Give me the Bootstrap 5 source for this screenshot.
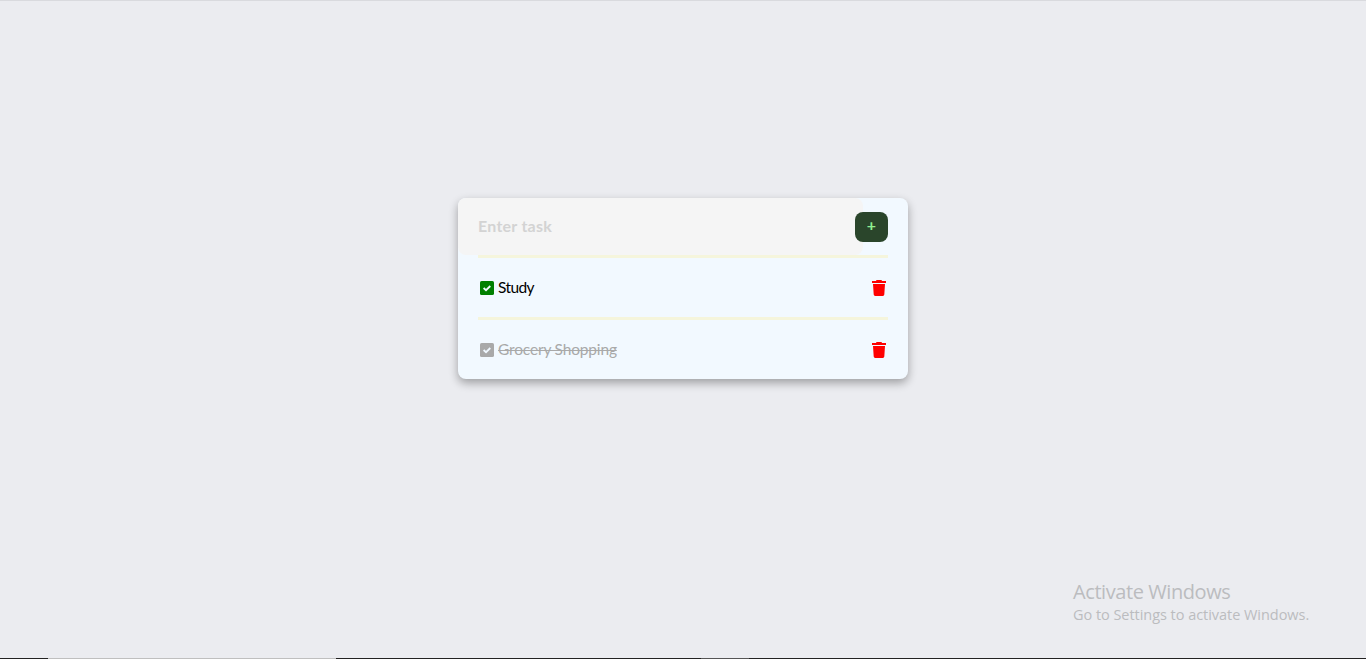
<!DOCTYPE html>
<html lang="en">
<head>
<meta charset="utf-8">
<meta name="viewport" content="width=device-width, initial-scale=1">
<title>To-do list</title>
<link rel="stylesheet" href="https://cdn.jsdelivr.net/npm/bootstrap@5.3.0/dist/css/bootstrap.min.css">
<style>
body{background:#ebecf0;font-family:Lato,"Liberation Sans",sans-serif;font-size:16px;line-height:20px;color:#000}
.top-line{height:1px;background:#d9dade}
.todo-card{width:450px;margin-top:197px;background:#f2f9ff;border-radius:8px;box-shadow:0 4px 10px rgba(0,0,0,.33)}
.entry-row{height:57px}
.task-input{width:405px;height:57px;padding:0 20px 2px;border:0;border-radius:8px;background:#f5f5f5;font-weight:700;font-size:16px;letter-spacing:.25px;outline:0}
.task-input::placeholder{color:#d3d3d3;opacity:1}
.add-btn{width:33px;height:30px;margin-left:-8px;border:0;border-radius:8px;background:#2a452b;color:#90ee90;font-size:16px;font-weight:700;line-height:26px;z-index:1}
.add-btn span{display:block;height:30px}
.task-row{height:62px;margin:0 20px;border-top:3px solid #f5f5dc}
.task-row svg{display:block}
.task-row span{margin-top:-2px;font-size:15.5px}
.check-icon{color:green;margin:0 4px 0 2px}
.done,.done .check-icon{color:#a9a9a9}
.done span{text-decoration:line-through;text-decoration-thickness:1px}
.label-study{letter-spacing:-.6px}
.label-grocery{letter-spacing:-.17px}
.trash-icon{color:red;margin-right:2px}
.watermark{width:236px;margin-right:57px;margin-bottom:32px;color:#bbbcbf;font-family:"Open Sans",sans-serif;white-space:nowrap}
.wm-title{font-size:20px;line-height:24px;letter-spacing:-.42px}
.wm-text{font-size:14.5px;line-height:22px;letter-spacing:-.04px}
.task-strip{height:1px;background:#222}
.strip-search{width:288px;margin-left:48px;background:#bfbfbf}
.strip-app{width:48px;margin-left:365px;background:#555}
</style>
</head>
<body class="vh-100 d-flex flex-column overflow-hidden">
<div class="top-line flex-shrink-0"></div>
<main class="todo-card mx-auto flex-shrink-0">
  <form class="entry-row d-flex align-items-center">
    <input class="task-input" type="text" placeholder="Enter task" aria-label="Enter task">
    <button class="add-btn p-0 position-relative" type="button" aria-label="Add"><span>+</span></button>
  </form>
  <div class="task-row d-flex align-items-center">
    <svg class="check-icon" width="14" height="14" viewBox="0 0 14 14"><rect width="14" height="14" rx="1.6" fill="currentColor"/><path d="M3.6 7 6 9.2 10.3 5" fill="none" stroke="#f0f8ff" stroke-width="1.8"/></svg>
    <span class="label-study">Study</span>
    <svg class="trash-icon ms-auto" width="14" height="16" viewBox="0 0 14 16" fill="currentColor"><path d="M0 1h4l.5-1h5l.5 1h4v2H0zM1 4h12l-.7 10.6A1.5 1.5 0 0 1 10.8 16H3.2a1.5 1.5 0 0 1-1.5-1.4z"/></svg>
  </div>
  <div class="task-row done d-flex align-items-center">
    <svg class="check-icon" width="14" height="14" viewBox="0 0 14 14"><rect width="14" height="14" rx="1.6" fill="currentColor"/><path d="M3.6 7 6 9.2 10.3 5" fill="none" stroke="#f0f8ff" stroke-width="1.8"/></svg>
    <span class="label-grocery">Grocery Shopping</span>
    <svg class="trash-icon ms-auto" width="14" height="16" viewBox="0 0 14 16" fill="currentColor"><path d="M0 1h4l.5-1h5l.5 1h4v2H0zM1 4h12l-.7 10.6A1.5 1.5 0 0 1 10.8 16H3.2a1.5 1.5 0 0 1-1.5-1.4z"/></svg>
  </div>
</main>
<aside class="watermark mt-auto ms-auto">
  <div class="wm-title">Activate Windows</div>
  <div class="wm-text">Go to Settings to activate Windows.</div>
</aside>
<div class="task-strip d-flex flex-shrink-0"><div class="strip-search"></div><div class="strip-app"></div></div>
<script src="https://cdn.jsdelivr.net/npm/bootstrap@5.3.0/dist/js/bootstrap.bundle.min.js"></script>
</body>
</html>
